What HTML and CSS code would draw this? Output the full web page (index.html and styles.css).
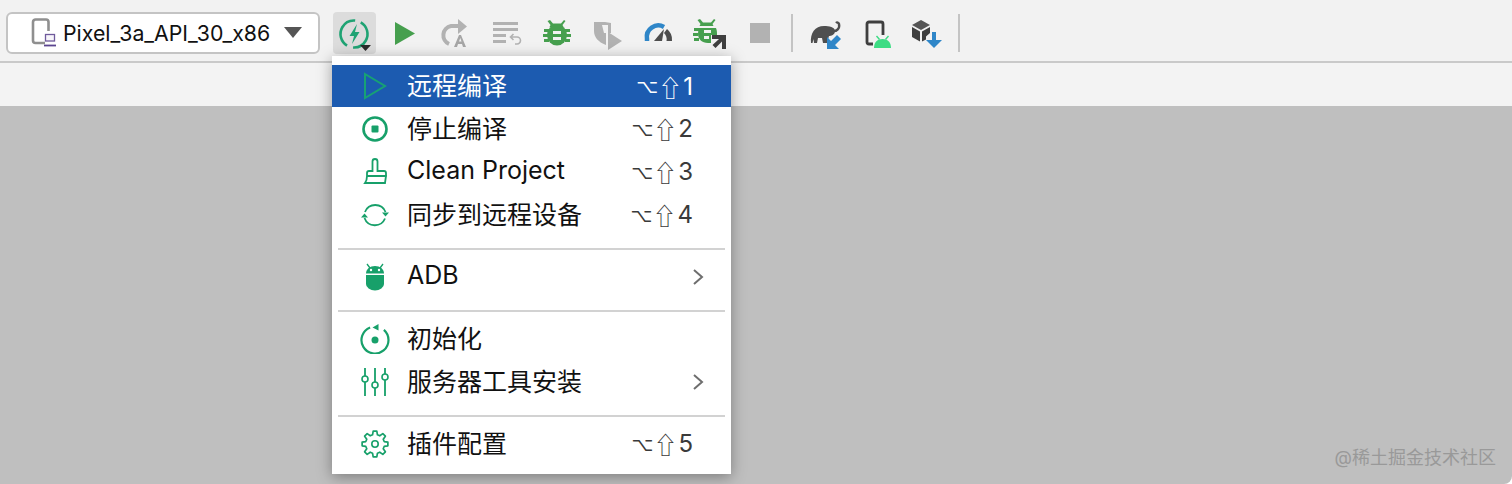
FILE: index.html

```html
<!DOCTYPE html>
<html lang="zh">
<head>
    <meta charset="UTF-8">
    <title>Remote Build Menu</title>
    <link rel="stylesheet" href="styles.css">
</head>
<body>
    <div class="window">
        <div class="toolbar">
            <div class="device-select">
                <svg class="device-icon" width="26" height="30" viewBox="0 0 26 30">
                    <path d="M14 25H4.5A2.5 2.5 0 0 1 2 22.500V4A2.500 2.500 0 0 1 4.500 1.500H15A2.500 2.500 0 0 1 17.500 4V13" fill="none" stroke="#8f8f8f" stroke-width="2.600"/>
                    <rect x="14.500" y="16.500" width="9" height="6.500" fill="#f7f5fa" stroke="#6f5a9c" stroke-width="1.300"/>
                    <path d="M13 27.500h12" stroke="#5b4590" stroke-width="1.800"/>
                </svg>
                <span class="device-name">Pixel_3a_API_30_x86</span>
                <span class="caret"></span>
            </div>

            <div class="tool tool-active">
                <svg width="36" height="36" viewBox="0 0 36 36">
                    <circle cx="18" cy="19" r="13.500" fill="none" stroke="#1fa373" stroke-width="2.600" stroke-dasharray="36 6.400" transform="rotate(-60 18 19)"/>
                    <path d="M21 9L13.500 21h4.500l-2 8 7.500-12h-4.500z" fill="#1fa373"/>
                    <path d="M24 30h11l-5.500 6z" fill="#2b2b2b"/>
                </svg>
            </div>
            <div class="tool">
                <svg width="36" height="36" viewBox="0 0 36 36"><path d="M8 7l20 11.500L8 30z" fill="#469f4e"/></svg>
            </div>
            <div class="tool">
                <svg width="36" height="36" viewBox="0 0 36 36">
                    <path d="M12 29A9.500 9.500 0 0 1 14 11H23" fill="none" stroke="#b2b2b2" stroke-width="4"/>
                    <path d="M21 4l9 7.500-9 7.500z" fill="#b2b2b2"/>
                    <path d="M17 32l5-12h2l5 12h-3l-1-3h-4l-1 3zM22 26.500h2.500l-1.200-3.500z" fill="#a6a6a6" fill-rule="evenodd"/>
                </svg>
            </div>
            <div class="tool">
                <svg width="36" height="36" viewBox="0 0 36 36">
                    <path d="M5 7h25v3H5zM5 13h25v3H5zM5 19h13v3H5zM5 25h13v3H5z" fill="#b2b2b2"/>
                    <path d="M23 22h6a3.500 3.500 0 0 1 0 7h-2M25.500 19l-3 3 3 3" fill="none" stroke="#b2b2b2" stroke-width="1.600"/>
                </svg>
            </div>
            <div class="tool">
                <svg width="36" height="36" viewBox="0 0 36 36">
                    <path d="M11 5l3 3.500h8l3-3.500 1.500 1-3 4 1 2H10.500l1-2-3-4z" fill="#469f4e"/>
                    <ellipse cx="18" cy="20" rx="10" ry="10.500" fill="#469f4e"/>
                    <path d="M5 14h5v3H5zM26 14h5v3h-5zM4 19h5v3H4zM27 19h5v3h-5zM5 24h5v3H5zM26 24h5v3h-5z" fill="#469f4e"/>
                    <path d="M14 16h8v3h-8zM14 22h8v3h-8z" fill="#f2f2f2"/>
                </svg>
            </div>
            <div class="tool">
                <svg width="36" height="36" viewBox="0 0 36 36">
                    <path d="M4 7h11l6 1v10h-5v12C8 27 4 22 4 16z" fill="#b2b2b2"/>
                    <path d="M12 10h6v8h-4z" fill="#f2f2f2"/>
                    <path d="M18 17l14 9-14 9z" fill="#b2b2b2"/>
                </svg>
            </div>
            <div class="tool">
                <svg width="36" height="36" viewBox="0 0 36 36">
                    <path d="M7 26V24A11.500 11.500 0 0 1 24 12" fill="none" stroke="#2f86c8" stroke-width="4.500"/>
                    <path d="M27 14A13.500 13.500 0 0 1 32 26h-5.500a9 9 0 0 0-2.500-8z" fill="#4d4d4d"/>
                    <path d="M14 26L24 14l-2 12z" fill="#4d4d4d"/>
                </svg>
            </div>
            <div class="tool">
                <svg width="36" height="36" viewBox="0 0 36 36">
                    <path d="M9 4l3 3.500h8l3-3.500 1.500 1-3 4 1 2H8.500l1-2-3-4z" fill="#469f4e"/>
                    <path d="M8 13h17c1 2 1 5 1 7h-6v8h-3C11 28 7 24 7 19c0-2 .3-4 1-6z" fill="#469f4e"/>
                    <path d="M3 13h5v3H3zM2 18h5v3H2zM3 23h5v3H3z" fill="#469f4e"/>
                    <path d="M13 15h7v3h-7zM13 21h5v3h-5z" fill="#f2f2f2"/>
                    <path d="M21 20h14v14h-4v-7.500L24.500 33 21.500 30l6.500-6h-7z" fill="#3f3f3f"/>
                </svg>
            </div>
            <div class="tool">
                <svg width="36" height="36" viewBox="0 0 36 36"><rect x="8" y="8" width="20" height="20" fill="#b2b2b2"/></svg>
            </div>

            <div class="tool-sep"></div>

            <div class="tool">
                <svg width="36" height="36" viewBox="0 0 36 36">
                    <path d="M4 28C3 18 8 11 17 11c5 0 11 1 11 5 0 4-4 5-6 5l-2 7h-4l-1-5h-4l-1 5H7l-.5-4-1 4z" fill="#4f4f4f"/>
                    <path d="M25 16c5 1 8-3 7-7-.5-1.500-2-2-3-1" fill="none" stroke="#4f4f4f" stroke-width="2.400"/>
                    <path d="M20 34V22l4 4 6-6 4 4-6 6 4 4z" fill="#2f86c8"/>
                </svg>
            </div>
            <div class="tool">
                <svg width="36" height="36" viewBox="0 0 36 36">
                    <path d="M16 29H12a2 2 0 0 1-2-2V9a2 2 0 0 1 2-2H24a2 2 0 0 1 2 2V20" fill="none" stroke="#3f3f3f" stroke-width="2.800"/>
                    <path d="M17 33c0-6 3.500-9 8.500-9s8.500 3 8.500 9z" fill="#3ddc84"/>
                    <path d="M19.500 21l3 3.500M31.500 21l-3 3.500" stroke="#3ddc84" stroke-width="1.400"/>
                </svg>
            </div>
            <div class="tool">
                <svg width="36" height="36" viewBox="0 0 36 36">
                    <path d="M13 5l9 5-9 5-9-5z" fill="#555"/>
                    <path d="M4 12l8 4.500v10L4 22zM14 16.500l8-4.500v6l-4 3.500v3L14 26.500z" fill="#3f3f3f"/>
                    <path d="M24 17h4v8h6l-8 8-8-8h6z" fill="#2f86c8"/>
                </svg>
            </div>

            <div class="tool-sep"></div>
        </div>

        <div class="subbar"></div>
        <div class="content"></div>

        <div class="menu">
            <div class="menu-item menu-item-selected">
                <svg class="menu-icon" width="30" height="30" viewBox="0 0 30 30"><path d="M5 3l20 12-20 12z" fill="none" stroke="#17a274" stroke-width="2"/></svg>
                <span class="menu-label">远程编译</span>
                <span class="shortcut"><span class="key-opt">⌥</span><span class="key-shift">⇧</span>1</span>
            </div>
            <div class="menu-item">
                <svg class="menu-icon" width="30" height="30" viewBox="0 0 30 30"><circle cx="15" cy="15" r="11.500" fill="none" stroke="#17a06a" stroke-width="2.600"/><rect x="11.500" y="11.500" width="7" height="7" rx="1" fill="#17a06a"/></svg>
                <span class="menu-label">停止编译</span>
                <span class="shortcut"><span class="key-opt">⌥</span><span class="key-shift">⇧</span>2</span>
            </div>
            <div class="menu-item">
                <svg class="menu-icon" width="30" height="30" viewBox="0 0 30 30"><path d="M12.500 4.500a2.500 2.500 0 0 1 5 0V14h6.500a2 2 0 0 1 2 2v3H7v-3a2 2 0 0 1 2-2h3.500zM7 19h19l-1 7H5c1.500-2 2-4 2-7z" fill="none" stroke="#17a06a" stroke-width="1.800"/></svg>
                <span class="menu-label">Clean Project</span>
                <span class="shortcut"><span class="key-opt">⌥</span><span class="key-shift">⇧</span>3</span>
            </div>
            <div class="menu-item">
                <svg class="menu-icon" width="30" height="30" viewBox="0 0 30 30">
                    <path d="M5 12A11 11 0 0 1 25.500 12M25 18.500A11 11 0 0 1 4.500 18" fill="none" stroke="#17a06a" stroke-width="1.800"/>
                    <path d="M22 12.500h7l-3.500 4zM1 17.500h7l-3.500-4z" fill="#17a06a"/>
                </svg>
                <span class="menu-label">同步到远程设备</span>
                <span class="shortcut"><span class="key-opt">⌥</span><span class="key-shift">⇧</span>4</span>
            </div>

            <div class="menu-sep"></div>

            <div class="menu-item">
                <svg class="menu-icon" width="30" height="30" viewBox="0 0 30 30">
                    <path d="M7 2l3 4M23 2l-3 4" stroke="#17a06a" stroke-width="1.300"/>
                    <path d="M6 11.500C6 7 10 4 15 4s9 3 9 7.500z" fill="#17a06a"/>
                    <path d="M6 13h18v9a9 6.500 0 0 1-18 0z" fill="#17a06a"/>
                    <circle cx="11" cy="8" r="1.200" fill="#fff"/>
                    <circle cx="19" cy="8" r="1.200" fill="#fff"/>
                </svg>
                <span class="menu-label">ADB</span>
                <svg class="chevron" width="14" height="18" viewBox="0 0 14 18"><path d="M3 2l8 7-8 7" fill="none" stroke="#6e6e6e" stroke-width="2"/></svg>
            </div>

            <div class="menu-sep"></div>

            <div class="menu-item">
                <svg class="menu-icon" width="30" height="30" viewBox="0 0 30 30">
                    <path d="M8 4.500A13.500 13.500 0 1 0 22 4.500" fill="none" stroke="#17a06a" stroke-width="2.200" transform="rotate(10 15 16)"/>
                    <path d="M18.500 0l-6 3.500 6 3z" fill="#17a06a"/>
                    <circle cx="15" cy="16" r="3.500" fill="#17a06a"/>
                </svg>
                <span class="menu-label">初始化</span>
            </div>
            <div class="menu-item">
                <svg class="menu-icon" width="30" height="30" viewBox="0 0 30 30">
                    <path d="M5 1v8M5 15v14M15 1v14M15 21v8M25 1v6M25 13v16" stroke="#17a06a" stroke-width="1.800"/>
                    <circle cx="5" cy="12" r="3" fill="none" stroke="#17a06a" stroke-width="1.600"/>
                    <circle cx="15" cy="18" r="3" fill="none" stroke="#17a06a" stroke-width="1.600"/>
                    <circle cx="25" cy="10" r="3" fill="none" stroke="#17a06a" stroke-width="1.600"/>
                </svg>
                <span class="menu-label">服务器工具安装</span>
                <svg class="chevron" width="14" height="18" viewBox="0 0 14 18"><path d="M3 2l8 7-8 7" fill="none" stroke="#6e6e6e" stroke-width="2"/></svg>
            </div>

            <div class="menu-sep"></div>

            <div class="menu-item">
                <svg class="menu-icon" width="30" height="30" viewBox="0 0 30 30">
                    <path d="M12.540 5.820L13.190 2.130H16.810L17.460 5.820L19.750 6.770L22.830 4.610L25.390 7.170L23.230 10.250L24.180 12.540L27.870 13.190V16.810L24.180 17.460L23.230 19.750L25.390 22.830L22.830 25.390L19.750 23.230L17.460 24.180L16.810 27.870H13.190L12.540 24.180L10.250 23.230L7.170 25.390L4.610 22.830L6.770 19.750L5.820 17.460L2.130 16.810V13.190L5.820 12.540L6.770 10.250L4.610 7.170L7.170 4.610L10.250 6.770z" fill="none" stroke="#17a06a" stroke-width="1.700" stroke-linejoin="round"/>
                    <circle cx="15" cy="15" r="3.200" fill="none" stroke="#17a06a" stroke-width="1.600"/>
                </svg>
                <span class="menu-label">插件配置</span>
                <span class="shortcut"><span class="key-opt">⌥</span><span class="key-shift">⇧</span>5</span>
            </div>
        </div>

        <div class="watermark">@稀土掘金技术社区</div>
    </div>
</body>
</html>
```

FILE: styles.css

```css
html, body {
    margin: 0;
    padding: 0;
    background: white;
}
body {
    width: 1512px;
    height: 484px;
    overflow: hidden;
    font-family: Inter, "Noto Sans CJK SC", sans-serif;
}
.window {
    position: relative;
    display: flex;
    flex-direction: column;
    height: 484px;
    overflow: hidden;
    border-bottom-right-radius: 8px;
}

/* toolbar */
.toolbar {
    display: flex;
    align-items: center;
    box-sizing: border-box;
    height: 63px;
    padding: 4px 0 0 6px;
    background: #f2f2f2;
    border-bottom: 2px solid #c9c9c9;
}
.device-select {
    display: flex;
    align-items: center;
    box-sizing: border-box;
    width: 314px;
    height: 42px;
    margin-right: 8.6px;
    padding-left: 23px;
    background: white;
    border: 2px solid #c4c4c4;
    border-radius: 6px;
}
.device-name {
    margin-left: 6px;
    font-size: 21.300px;
    color: #111;
}
.caret {
    width: 0;
    height: 0;
    margin-left: 14px;
    border-left: 9px solid transparent;
    border-right: 9px solid transparent;
    border-top: 11px solid #555;
}
.tool {
    display: flex;
    align-items: center;
    justify-content: center;
    width: 50.750px;
    height: 42px;
}
.tool-active {
    position: relative;
}
.tool-active::before {
    content: "";
    position: absolute;
    top: 0;
    left: 4px;
    width: 43px;
    height: 42px;
    background: #dcdcdc;
    border-radius: 4px;
}
.tool-active svg {
    position: relative;
}
.tool-sep {
    width: 2px;
    height: 38px;
    margin: 0 6px;
    background: #c4c4c4;
}

.subbar {
    height: 43px;
    background: #f3f3f3;
}
.content {
    flex: 1;
    background: #bfbfbf;
}

/* popup menu */
.menu {
    position: absolute;
    top: 56px;
    left: 332px;
    box-sizing: border-box;
    width: 399px;
    height: 418px;
    padding: 9px 0 8px;
    background: white;
    box-shadow: 0 3px 14px rgba(0,0,0,0.35);
}
.menu-item {
    display: flex;
    align-items: center;
    height: 43px;
    padding: 0 38px 0 28px;
    font-size: 25px;
    color: #111;
}
.menu-item-selected {
    height: 42px;
    background: #1c5bb0;
    color: white;
}
.menu-icon {
    flex: none;
    margin-right: 17px;
}
.menu-label {
    flex: 1;
    padding-bottom: 3px;
}
.menu-item-selected .menu-label {
    padding-bottom: 5px;
}
.shortcut {
    display: flex;
    align-items: center;
    font-size: 24px;
    color: #3a3a3a;
}
.key-opt {
    font-family: "DejaVu Sans", sans-serif;
    font-size: 19px;
}
.key-shift {
    margin-right: 1px;
    font-family: "Noto Sans CJK SC", "DejaVu Sans", sans-serif;
    font-size: 24px;
}
.menu-item-selected .shortcut {
    color: white;
}
.chevron {
    margin-right: -12px;
}
.menu-sep {
    height: 2px;
    margin: 12px 6px 5px;
    background: #d2d2d2;
}

.watermark {
    position: absolute;
    right: 16px;
    bottom: 15px;
    font-size: 18px;
    color: #999;
}
```
